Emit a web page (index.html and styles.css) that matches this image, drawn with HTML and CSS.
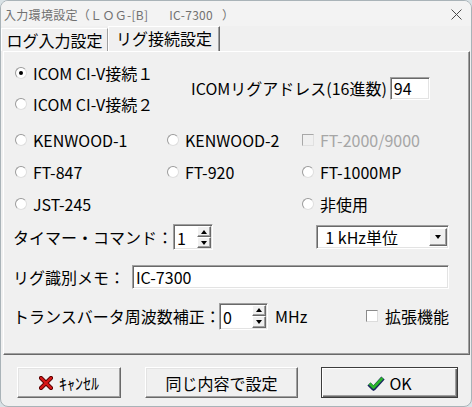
FILE: index.html
```html
<!DOCTYPE html>
<html lang="ja">
<head>
  <meta charset="UTF-8">
  <title>入力環境設定</title>
  <link rel="stylesheet" href="styles.css">
</head>
<body>
  <div class="window">
    <div class="titlebar">
      <span class="title">入力環境設定（ＬＯＧ-[B]       IC-7300   ）</span>
      <svg class="close" width="11" height="11" viewBox="0 0 11 11"><path d="M0.5 0.5L10.5 10.5M10.5 0.5L0.5 10.5" stroke="#4a4a4a" stroke-width="1" fill="none"/></svg>
    </div>
    <div class="tabs">
      <div class="tab">ログ入力設定</div>
      <div class="tab active">リグ接続設定</div>
    </div>
    <div class="panel">
      <div class="icom">
        <div class="icom-radios">
          <div class="opt"><span class="radio checked"></span>ICOM CI-V接続１</div>
          <div class="opt"><span class="radio"></span>ICOM CI-V接続２</div>
        </div>
        <div class="addr">
          <span>ICOMリグアドレス(16進数)</span>
          <span class="field addr-field">94</span>
        </div>
      </div>
      <div class="rigs">
        <div class="opt"><span class="radio"></span>KENWOOD-1</div>
        <div class="opt"><span class="radio"></span>KENWOOD-2</div>
        <div class="opt disabled"><span class="check"></span>FT-2000/9000</div>
        <div class="opt"><span class="radio"></span>FT-847</div>
        <div class="opt"><span class="radio"></span>FT-920</div>
        <div class="opt"><span class="radio"></span>FT-1000MP</div>
        <div class="opt"><span class="radio"></span>JST-245</div>
        <div></div>
        <div class="opt"><span class="radio"></span>非使用</div>
      </div>
      <div class="row timer-row">
        <span class="timer-label">タイマー・コマンド：</span>
        <span class="field spin timer-spin">
          <span class="value">1</span>
          <span class="spin-btns"><span class="spin-btn up"></span><span class="spin-btn down"></span></span>
        </span>
        <span class="field select">
          <span class="value">1 kHz単位</span>
          <span class="drop-btn"></span>
        </span>
      </div>
      <div class="row memo-row">
        <span class="memo-label">リグ識別メモ：</span>
        <span class="field memo-field">IC-7300</span>
      </div>
      <div class="row trans-row">
        <span class="trans-label">トランスバータ周波数補正：</span>
        <span class="field spin trans-spin">
          <span class="value">0</span>
          <span class="spin-btns"><span class="spin-btn up"></span><span class="spin-btn down"></span></span>
        </span>
        <span class="unit">MHz</span>
        <span class="ext"><span class="check"></span>拡張機能</span>
      </div>
    </div>
    <div class="buttons">
      <div class="btn btn-cancel">
        <svg width="14" height="14" viewBox="0 0 14 14"><path d="M2 2L12 12M12 2L2 12" stroke="#5a0000" stroke-width="4.2" stroke-linecap="round"/><path d="M2 2L12 12M12 2L2 12" stroke="#d81818" stroke-width="2.4" stroke-linecap="round"/></svg>
        <span>ｷｬﾝｾﾙ</span>
      </div>
      <div class="btn btn-same">同じ内容で設定</div>
      <div class="btn btn-ok">
        <svg width="18" height="16" viewBox="0 0 18 16"><path d="M2 9L6.5 13.5L16 3" stroke="#1a2660" stroke-width="4.5" fill="none" stroke-linejoin="round"/><path d="M2.5 8.5L6.5 12.5L15.5 3" stroke="#2bb52b" stroke-width="2.6" fill="none" stroke-linejoin="round"/></svg>
        <span>OK</span>
      </div>
    </div>
  </div>
</body>
</html>
```

FILE: styles.css
```css
* {
  box-sizing: border-box;
}
html {
  background: #d9e2e6;
}
body {
  margin: 0;
  font-family: "Noto Sans CJK JP", sans-serif;
  font-size: 16px;
  color: #000;
}
.window {
  width: 472px;
  height: 407px;
  background: #f0f0f0;
  border: 1px solid #a9b3b8;
  border-radius: 8px;
  overflow: hidden;
}
.titlebar {
  height: 25px;
  display: flex;
  align-items: center;
  justify-content: space-between;
  padding: 1px 9px 0 3px;
  background: #f3f3f3;
}
.title {
  font-size: 12px;
  letter-spacing: 0.3px;
  color: #717171;
  white-space: pre;
}
.close {
  display: block;
}

/* tabs */
.tabs {
  height: 25px;
  display: flex;
  align-items: flex-end;
}
.tab {
  width: 107px;
  height: 23px;
  display: flex;
  align-items: center;
  justify-content: center;
  line-height: 1;
  border: 1px solid;
  border-color: #fff #a0a0a0 transparent #fff;
  border-bottom: none;
}
.tab.active {
  width: 112px;
  height: 25px;
  padding-bottom: 2px;
  border-right-color: #696969;
  box-shadow: inset -1px 0 0 #a0a0a0;
}
.panel {
  height: 304px;
  margin: 0 1px 0 2px;
  border: 1px solid;
  border-color: #fff #696969 #696969 #fff;
  box-shadow: inset -1px -1px 0 #a0a0a0;
  padding: 5px 20px 0 9px;
}

/* options */
.icom {
  display: flex;
  height: 62px;
}
.icom-radios {
  width: 176px;
  margin-left: 2px;
  display: flex;
  flex-direction: column;
}
.opt {
  height: 31px;
  display: flex;
  align-items: center;
  white-space: nowrap;
}
.opt.disabled {
  color: #a6a6a6;
}
.radio {
  position: relative;
  flex: none;
  width: 12px;
  height: 12px;
  margin-right: 6px;
  border-radius: 50%;
  background: #fff;
  border: 1px solid;
  border-color: #9a9a9a #dedede #dedede #9a9a9a;
}
.radio.checked::after {
  content: '';
  position: absolute;
  left: 3px;
  top: 3px;
  width: 4px;
  height: 4px;
  border-radius: 50%;
  background: #000;
}
.check {
  flex: none;
  width: 12px;
  height: 12px;
  margin-right: 6px;
  background: #fff;
  border: 1px solid;
  border-color: #8a8a8a #dcdcdc #dcdcdc #8a8a8a;
}
.disabled .check {
  background: #f0f0f0;
  border-color: #a8a8a8 #e0e0e0 #e0e0e0 #a8a8a8;
}
.addr {
  display: flex;
  align-items: center;
  gap: 3px;
  white-space: nowrap;
}
.rigs {
  margin: 4px 0 0 2px;
  display: grid;
  grid-template-columns: 152px 135px 1fr;
  grid-template-rows: 33px 32px 32px;
}
.rigs .opt {
  height: auto;
}

/* fields */
.field {
  display: flex;
  align-items: center;
  background: #fff;
  border: 1px solid;
  border-color: #a0a0a0 #fff #fff #a0a0a0;
  box-shadow: inset 1px 1px 0 #696969, inset -1px -1px 0 #e3e3e3;
  padding-left: 3px;
  line-height: 1;
  white-space: nowrap;
}
.addr-field {
  width: 40px;
  height: 23px;
}
.row {
  display: flex;
  align-items: center;
  height: 30px;
  white-space: nowrap;
}
.timer-row {
  margin-top: 2px;
}
.timer-label {
  width: 160px;
}
.spin {
  padding: 1px 1px 1px 3px;
  align-items: stretch;
}
.spin .value {
  display: flex;
  align-items: center;
  padding-top: 1px;
}
.spin-btns {
  margin-left: auto;
  width: 14px;
  display: flex;
  flex-direction: column;
}
.spin-btn,
.drop-btn {
  flex: 1;
  display: flex;
  align-items: center;
  justify-content: center;
  background: #f0f0f0;
  border: 1px solid;
  border-color: #fff #696969 #696969 #fff;
  box-shadow: inset -1px -1px 0 #a0a0a0;
}
.spin-btn::after,
.drop-btn::after {
  content: '';
  border-left: 3.5px solid transparent;
  border-right: 3.5px solid transparent;
}
.up::after {
  border-bottom: 4px solid #000;
}
.down::after,
.drop-btn::after {
  border-top: 4px solid #000;
}
.timer-spin {
  width: 41px;
  height: 26px;
}
.select {
  width: 135px;
  height: 24px;
  margin-left: 103px;
  padding: 2px 1px 2px 8px;
  align-items: stretch;
}
.select .value {
  display: flex;
  align-items: center;
}
.drop-btn {
  flex: none;
  margin-left: auto;
  width: 18px;
}
.memo-row {
  margin-top: 10px;
}
.memo-label {
  width: 120px;
}
.memo-field {
  width: 320px;
  height: 24px;
}
.trans-row {
  margin-top: 9px;
}
.trans-label {
  width: 206px;
}
.trans-spin {
  width: 49px;
  height: 27px;
}
.unit {
  margin-left: 7px;
}
.ext {
  margin-left: auto;
  display: flex;
  align-items: center;
}
.ext .check {
  margin-right: 7px;
}

/* buttons */
.buttons {
  display: flex;
  margin-top: 12px;
  padding-left: 16px;
}
.btn {
  height: 31px;
  display: flex;
  align-items: center;
  justify-content: center;
  gap: 6px;
  line-height: 1;
  background: #f0f0f0;
  border: 1px solid;
  border-color: #fff #696969 #696969 #fff;
  box-shadow: inset -1px -1px 0 #a0a0a0, inset 1px 1px 0 #e3e3e3;
}
.btn svg {
  display: block;
}
.btn-cancel {
  width: 104px;
}
.btn-same {
  width: 153px;
  margin-left: 24px;
}
.btn-ok {
  width: 137px;
  margin-left: 23px;
  gap: 4px;
  border-color: #3c3c3c;
  box-shadow: inset 1px 1px 0 #fff, inset -1px -1px 0 #696969, inset -2px -2px 0 #a0a0a0;
}
```
